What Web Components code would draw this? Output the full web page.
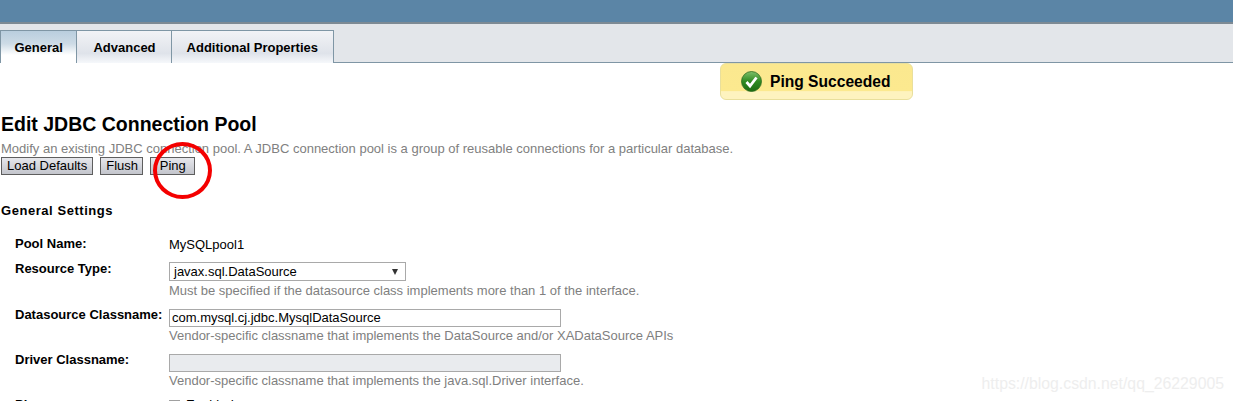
<!DOCTYPE html>
<html>
<head>
<meta charset="utf-8">
<title>Edit JDBC Connection Pool</title>
<style>
  html, body { margin: 0; height: 401px; overflow: hidden; background: #fff; }
  body { font-family: "Liberation Sans", Arial, sans-serif; font-size: 13px; color: #000; position: relative; }
</style>
</head>
<body>
<top-bar></top-bar>
<tab-set>
  <tab-item active>General</tab-item>
  <tab-item style="padding-left: 16px">Advanced</tab-item>
  <tab-item>Additional Properties</tab-item>
</tab-set>
<status-alert>Ping Succeeded</status-alert>
<page-title heading="Edit JDBC Connection Pool">Modify an existing JDBC connection pool. A JDBC connection pool is a group of reusable connections for a particular database.</page-title>
<button-row>
  <action-button>Load Defaults</action-button>
  <action-button style="width: 43px">Flush</action-button>
  <action-button style="width: 45px">Ping</action-button>
</button-row>
<section-title>General Settings</section-title>
<form-row label="Pool Name:"><span>MySQLpool1</span></form-row>
<form-row label="Resource Type:" help="Must be specified if the datasource class implements more than 1 of the interface."><select-box>javax.sql.DataSource</select-box></form-row>
<form-row label="Datasource Classname:" help="Vendor-specific classname that implements the DataSource and/or XADataSource APIs"><text-box>com.mysql.cj.jdbc.MysqlDataSource</text-box></form-row>
<form-row label="Driver Classname:" help="Vendor-specific classname that implements the java.sql.Driver interface."><text-box disabled></text-box></form-row>
<form-row label="Ping:"><check-box>Enabled</check-box></form-row>
<red-circle></red-circle>
<water-mark>https://blog.csdn.net/qq_26229005</water-mark>

<script>
function define(name, html, init) {
  customElements.define(name, class extends HTMLElement {
    constructor() {
      super();
      this.attachShadow({ mode: 'open' });
    }
    connectedCallback() {
      this.shadowRoot.innerHTML = html;
      if (init) init(this);
    }
  });
}

define('top-bar', `
  <style>
    :host { display: block; height: 22px; background: #5b85a6; border-bottom: 2px solid #7d8a94; }
  </style>`);

define('tab-set', `
  <style>
    :host { display: flex; height: 32px; padding-top: 6px; background: #e3e6ea; border-bottom: 1px solid #7f96a5; }
  </style>
  <slot></slot>`);

define('tab-item', `
  <style>
    :host {
      display: flex; align-items: center; padding: 0 15px 0 15px; box-sizing: border-box; height: 33px;
      font: bold 13px "Liberation Sans", Arial, sans-serif; color: #000;
      border: 1px solid #7f96a5; border-left: 0; border-bottom: 0;
      background: linear-gradient(#f2f3f6 0, #dfe3ea 70%, #f6f8fb 100%);
    }
    :host([active]) {
      background: linear-gradient(#b9cede 0, #cddbe6 40%, #fff 75%);
      padding: 0 13.5px;
      border-left: 1px solid #7f96a5;
    }
  </style>
  <slot></slot>`);

define('status-alert', `
  <style>
    :host {
      display: flex; align-items: center; box-sizing: border-box;
      position: absolute; left: 720px; top: 63px; width: 193px; height: 37px; padding: 0 0 0 20px; gap: 8px;
      font: bold 15.6px "Liberation Sans", Arial, sans-serif; color: #000;
      border: 1px solid #e9df9c; border-radius: 6px;
      background: linear-gradient(#fbe88f 0, #fce98f 76%, #fef3bf 79%, #fef3bf 100%);
    }
    svg { flex: none; }
  </style>
  <svg width="21" height="21" viewBox="0 0 21 21">
    <defs><linearGradient id="g" x1="0" y1="0" x2="0" y2="1"><stop offset="0" stop-color="#7fc06a"/><stop offset=".5" stop-color="#2f8a22"/><stop offset="1" stop-color="#1b6a12"/></linearGradient></defs>
    <circle cx="10.5" cy="10.5" r="10" fill="url(#g)" stroke="#2c6b20" stroke-width=".8"/>
    <path d="M5.5 11 L9 15 L15.5 6.5" fill="none" stroke="#fff" stroke-width="2.8"/>
  </svg>
  <span><slot></slot></span>`);

define('page-title', `
  <style>
    :host { display: block; padding: 50px 0 0 1px; }
    h1 { margin: 0; font: bold 19.5px/23px "Liberation Sans", Arial, sans-serif; color: #000; }
    p { margin: 5px 0 0; font: 13px/15px "Liberation Sans", Arial, sans-serif; color: #808080; }
  </style>
  <h1></h1>
  <p><slot></slot></p>`, el => {
    el.shadowRoot.querySelector('h1').textContent = el.getAttribute('heading');
  });

define('button-row', `
  <style>
    :host { display: flex; gap: 7px; padding: 1px 0 0 1px; }
  </style>
  <slot></slot>`);

define('action-button', `
  <style>
    :host {
      display: block; box-sizing: border-box; height: 18px; padding: 0 5px; text-align: center;
      font: 13px/16px "Liberation Sans", Arial, sans-serif; color: #000;
      border: 1px solid #5e5e5e;
      background: linear-gradient(#e6e7ec 0, #c3c5cc 100%);
    }
  </style>
  <slot></slot>`);

define('section-title', `
  <style>
    :host { display: block; padding: 28px 0 17px 1px; font: bold 13px/16px "Liberation Sans", Arial, sans-serif; letter-spacing: .55px; color: #000; }
  </style>
  <slot></slot>`);

define('form-row', `
  <style>
    :host { display: grid; grid-template-columns: 154px 1fr; padding: 0 0 9px 15px; font: 13px/15px "Liberation Sans", Arial, sans-serif; }
    .l { font-weight: bold; }
    .c { padding-top: 1px; }
    .h { color: #808080; padding-top: 1px; }
    .h:empty { display: none; }
  </style>
  <div class="l"></div>
  <div class="c"><slot></slot><div class="h"></div></div>`, el => {
    el.shadowRoot.querySelector('.l').textContent = el.getAttribute('label');
    el.shadowRoot.querySelector('.h').textContent = el.getAttribute('help') || '';
  });

define('select-box', `
  <style>
    :host {
      display: flex; justify-content: space-between; align-items: center; box-sizing: border-box;
      width: 237px; height: 19px; margin-bottom: 1px; padding: 0 7px 0 4px; border: 1px solid #a9a9a9; background: #fff;
    }
    i { font-style: normal; width: 0; height: 0; border: 3.5px solid transparent; border-top: 6px solid #333; border-bottom: 0; }
  </style>
  <span><slot></slot></span><i></i>`);

define('text-box', `
  <style>
    :host {
      display: block; box-sizing: border-box; width: 392px; height: 18px; margin-top: 1px; padding: 0 2px;
      border: 1px solid #a9a9a9; background: #fff; line-height: 16px;
    }
    :host([disabled]) { background: #e9ebee; }
  </style>
  <slot></slot>`);

define('check-box', `
  <style>
    :host { display: flex; gap: 6px; margin-top: -1px; }
    i { width: 11px; height: 11px; margin-top: 3px; box-sizing: border-box; border: 1px solid #a0a0a0; background: #fff; }
  </style>
  <i></i><slot></slot>`);

define('red-circle', `
  <style>
    :host { position: absolute; left: 153px; top: 142px; width: 59px; height: 57px; box-sizing: border-box; border: 4.5px solid #f40000; border-radius: 50%; }
  </style>`);

define('water-mark', `
  <style>
    :host { position: absolute; right: 9px; top: 375px; font: 15.8px/18px "Liberation Sans", Arial, sans-serif; color: #eeeeee; white-space: nowrap; }
  </style>
  <slot></slot>`);
</script>
</body>
</html>
